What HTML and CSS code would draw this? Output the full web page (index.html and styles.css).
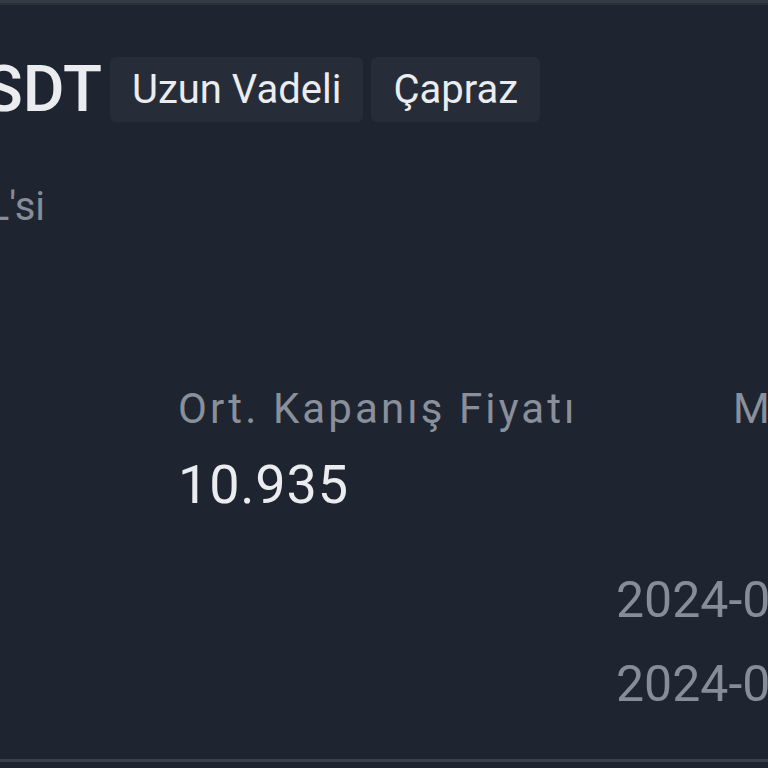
FILE: index.html
```html
<!DOCTYPE html>
<html lang="tr">
<head>
<meta charset="utf-8">
<title>Pozisyon</title>
<link rel="stylesheet" href="styles.css">
</head>
<body>
<div class="page">
  <div class="topbar"></div>
  <main class="content">
    <header class="title-row">
      <div class="symbol"><span>ETHUSDT</span></div>
      <span class="chip">Uzun Vadeli</span>
      <span class="chip">Çapraz</span>
    </header>
    <div class="subtitle"><span>ETHUSDT PERPETUAL'si</span></div>
    <section class="stats">
      <div class="stat stat-wide">
        <div class="stat-label">Ort. Kapanış Fiyatı</div>
        <div class="stat-value">10.935</div>
      </div>
      <div class="stat">
        <div class="stat-label">Maks. Açık Pozisyon</div>
      </div>
    </section>
    <div class="dates">
      <div class="date">2024-03-14 18:42:07</div>
      <div class="date">2024-03-15 09:16:53</div>
    </div>
  </main>
  <div class="bottombar"></div>
</div>
</body>
</html>
```

FILE: styles.css
```css
* { box-sizing: border-box; }
html, body {
  margin: 0;
  padding: 0;
  background: #1f2530;
}
body {
  width: 768px;
  height: 768px;
  overflow: hidden;
  font-family: Roboto, "Noto Sans", sans-serif;
}
.page {
  width: 768px;
  height: 768px;
  display: flex;
  flex-direction: column;
  overflow: hidden;
}
.topbar {
  height: 5px;
  flex: none;
  background: #353b45;
  border-bottom: 2px solid #2a303a;
}
.content {
  flex: 1;
  display: flex;
  flex-direction: column;
}
.title-row {
  margin-top: 52px;
  display: flex;
  align-items: center;
  gap: 8px;
  height: 65px;
}
.symbol {
  width: 102px;
  display: flex;
  justify-content: flex-end;
  overflow: hidden;
  white-space: nowrap;
  font-size: 64px;
  font-weight: 500;
  line-height: 65px;
  color: #eaecef;
}
.chip {
  height: 65px;
  line-height: 65px;
  padding: 0 22px;
  border-radius: 6px;
  background: #272d38;
  color: #eaecef;
  font-size: 40px;
  white-space: nowrap;
}
.subtitle {
  margin-top: 61px;
  width: 45px;
  display: flex;
  justify-content: flex-end;
  overflow: hidden;
  white-space: nowrap;
  font-size: 40px;
  line-height: 48px;
  color: #868d98;
}
.stats {
  margin-top: 154px;
  padding-left: 178px;
  display: flex;
  white-space: nowrap;
}
.stat {
  display: flex;
  flex-direction: column;
  gap: 20px;
}
.stat-wide { width: 555px; flex: none; }
.stat-label {
  font-size: 42px;
  line-height: 48px;
  letter-spacing: 3.1px;
  color: #8a909b;
}
.stat-value {
  font-size: 54px;
  line-height: 64px;
  letter-spacing: 0.8px;
  color: #eaecef;
}
.dates {
  margin-top: 41px;
  padding-left: 616px;
  white-space: nowrap;
}
.date {
  font-size: 50px;
  line-height: 84px;
  color: #868d98;
}
.bottombar {
  flex: none;
  height: 3px;
  margin-bottom: 6px;
  background: #3a404a;
}
```
